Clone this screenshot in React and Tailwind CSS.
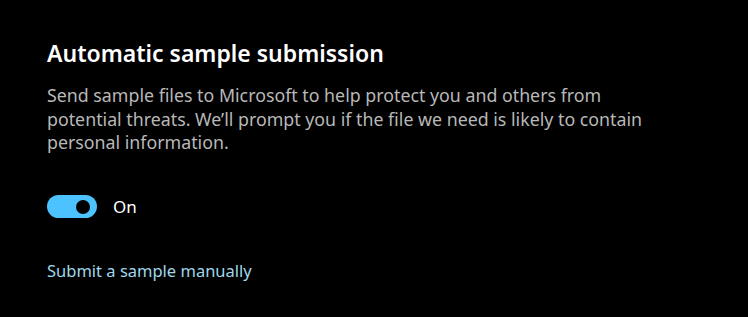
export default function App() {
  return (
    <div
      className="w-[748px] h-[317px] bg-black pl-[47px] pt-[38px] overflow-hidden"
      style={{ fontFamily: '"Noto Sans", "Open Sans", sans-serif' }}
    >
      <h1 className="text-[23px] leading-[30px] font-semibold text-white">
        Automatic sample submission
      </h1>
      <p className="mt-[16px] w-[600px] text-[17.8px] leading-[23.5px] text-[#b8b8b8]">
        Send sample files to Microsoft to help protect you and others from
        potential threats. We’ll prompt you if the file we need is likely to
        contain personal information.
      </p>
      <div className="mt-[40px] flex items-center gap-[16px]">
        <button
          type="button"
          className="w-[50px] h-[23px] rounded-full bg-[#4cc2ff] flex items-center justify-end pr-[7px]"
        >
          <span className="w-[14px] h-[14px] rounded-full bg-black" />
        </button>
        <span className="text-[17px] leading-[24px] text-white">On</span>
      </div>
      <a
        href="#"
        className="mt-[40px] block w-fit text-[16.5px] leading-[24px] text-[#9fd8ea]"
      >
        Submit a sample manually
      </a>
    </div>
  );
}
